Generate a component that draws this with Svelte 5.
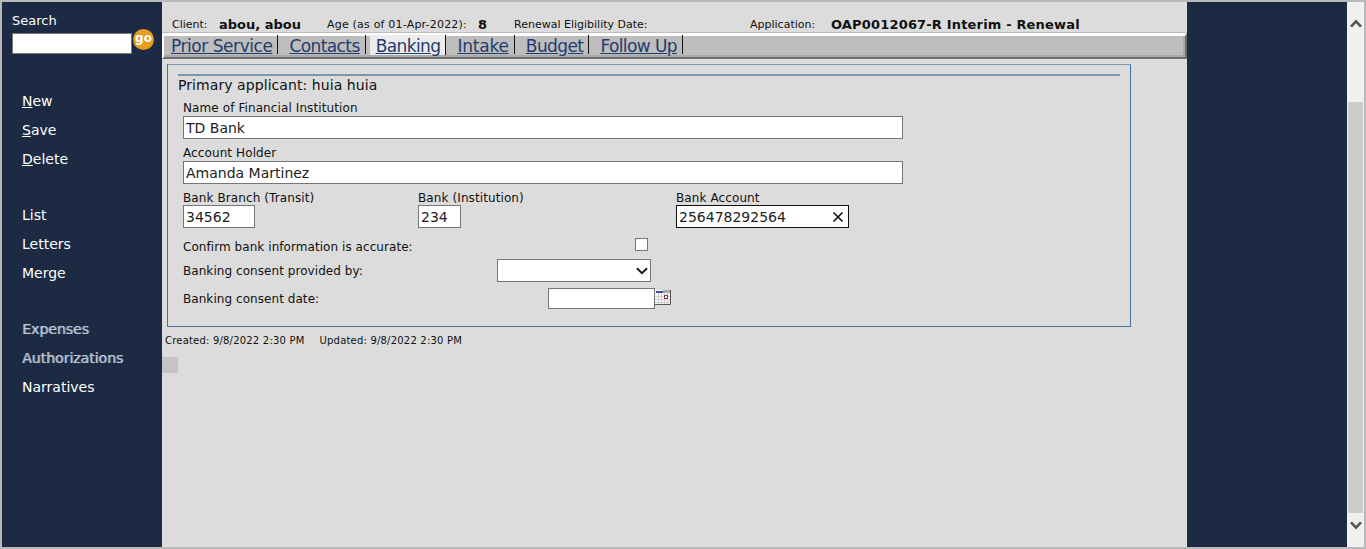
<script>
  const tabs = ['Prior Service', 'Contacts', 'Banking', 'Intake', 'Budget', 'Follow Up'];
  const groups = [
    [{ k: 'N', r: 'ew' }, { k: 'S', r: 'ave' }, { k: 'D', r: 'elete' }],
    [{ r: 'List' }, { r: 'Letters' }, { r: 'Merge' }],
    [{ r: 'Expenses', dim: true }, { r: 'Authorizations', dim: true }, { r: 'Narratives' }]
  ];
</script>

<div class="frame">
  <aside class="side">
    <div class="search">
      <label for="q">Search</label>
      <div class="searchrow">
        <input id="q" class="q" />
        <span class="go">go</span>
      </div>
    </div>
    <nav>
      {#each groups as g}
        <ul>
          {#each g as it}
            <li class:dim={it.dim}>{#if it.k}<u>{it.k}</u>{/if}{it.r}</li>
          {/each}
        </ul>
      {/each}
    </nav>
  </aside>

  <main class="main">
    <header class="head">
      <span class="h1">Client:</span><b class="h2">abou, abou</b>
      <span class="h3">Age (as of 01-Apr-2022):</span><b class="h4">8</b>
      <span class="h5">Renewal Eligibility Date:</span>
      <span class="h6">Application:</span><b class="h7">OAP0012067-R Interim - Renewal</b>
    </header>
    <div class="tabs">
      {#each tabs as t}
        <a href="#top" class="tab" class:on={t === 'Banking'}>{t}</a>
      {/each}
    </div>

    <section class="box">
      <hr />
      <div class="title">Primary applicant: huia huia</div>
      <label class="lab" for="f1">Name of Financial Institution</label>
      <input id="f1" class="inp wide" value="TD Bank" readonly />
      <label class="lab" for="f2">Account Holder</label>
      <input id="f2" class="inp wide" value="Amanda Martinez" readonly />
      <div class="bank">
        <div class="c1">
          <label class="lab" for="f3">Bank Branch (Transit)</label>
          <input id="f3" class="inp w72" value="34562" readonly />
        </div>
        <div class="c2">
          <label class="lab" for="f4">Bank (Institution)</label>
          <input id="f4" class="inp w43" value="234" readonly />
        </div>
        <div class="c3">
          <label class="lab" for="f5">Bank Account</label>
          <div class="acct">
            <input id="f5" class="inp w173" value="256478292564" readonly />
            <svg class="x" width="12" height="12" viewBox="0 0 12 12"><path d="M1.5 1.5 10.5 10.5M10.5 1.5 1.5 10.5" stroke="#111" stroke-width="1.6" fill="none"/></svg>
          </div>
        </div>
      </div>
      <div class="row r1"><span class="rl l1">Confirm bank information is accurate:</span><span class="check"></span></div>
      <div class="row r2"><span class="rl l2">Banking consent provided by:</span>
        <div class="sel"><svg width="12" height="8" viewBox="0 0 12 8"><path d="M1 1.2 6 6.2 11 1.2" stroke="#1a1a1a" stroke-width="2" fill="none"/></svg></div>
      </div>
      <div class="row r3"><span class="rl l3">Banking consent date:</span>
        <span class="date"></span>
        <svg class="cal" width="16" height="15" viewBox="0 0 16 15">
          <rect x="0" y="0" width="16" height="15" fill="#f6f6f6"/>
          <rect x="1" y="1" width="7" height="2" fill="#4a4aa8"/>
          <rect x="8" y="0" width="7" height="3" fill="#aaa"/>
          <path d="M0 6.5H15M0 9.5H15M0 12.5H15M3.5 3V15M6.5 3V15M9.5 3V15M12.5 3V15" stroke="#cfcfcf" stroke-width="1"/>
          <rect x="9.5" y="5.5" width="3" height="3" fill="#fff" stroke="#a03030"/>
          <path d="M15.5 0V14.5H0" stroke="#555" fill="none"/>
        </svg>
      </div>
    </section>

    <div class="stamp"><span>Created: 9/8/2022 2:30 PM</span><span>Updated: 9/8/2022 2:30 PM</span></div>
    <div class="chip"></div>
  </main>

  <div class="right"></div>

  <div class="scroll">
    <svg class="arrow" width="12" height="9" viewBox="0 0 12 9"><path d="M1 7.6 6 2.4 11 7.6" stroke="#555" stroke-width="2.6" fill="none"/></svg>
    <div class="thumb"></div>
    <svg class="arrow" width="12" height="9" viewBox="0 0 12 9"><path d="M1 1.4 6 6.6 11 1.4" stroke="#555" stroke-width="2.6" fill="none"/></svg>
  </div>
</div>

<style>
  :global(body) { margin: 0; overflow: hidden; }
  * { box-sizing: border-box; }
  .frame {
    width: 1366px; height: 549px; display: flex;
    border: 2px solid #b9b9b9;
    font-family: "DejaVu Sans", sans-serif;
    color: #111;
    background: #dcdcdc;
  }
  .side { width: 160px; flex: none; background: #1c2a44; color: #fff; padding: 11px 0 0 10px; font-size: 13px; }
  .search label { display: block; line-height: 15px; font-size: 13px; }
  .searchrow { display: flex; align-items: flex-start; margin-top: 5px; }
  .q { width: 120px; height: 21px; border: 1px solid #777; background: #fff; padding: 0; }
  .go {
    width: 21px; height: 21px; margin: -4px 0 0 1px; border-radius: 50%;
    background: #e89c1e; color: #fff; font-weight: 700; font-size: 12px;
    display: flex; align-items: center; justify-content: center; padding-bottom: 3px;
  }
  nav { margin: 37px 0 0 10px; }
  ul { list-style: none; margin: 0 0 27px; padding: 0; }
  li { height: 29px; line-height: 20px; font-size: 14px; }
  li.dim { color: #bcc7d6; text-shadow: 1px 0 0 rgba(220, 225, 232, .55); }

  .main { width: 1025px; flex: none; background: #dcdcdc; }
  .head {
    height: 31px; border-bottom: 1px solid #bdbdbd;
    display: flex; align-items: flex-end; padding: 0 0 0 10px;
    font-size: 11px; line-height: 14px;
  }
  .head b { font-size: 13px; font-weight: 700; }
  .head span, .head b { white-space: nowrap; }
  .h1 { width: 47px; }
  .h2 { width: 108px; }
  .h3 { width: 151px; letter-spacing: .2px; }
  .h4 { width: 36px; }
  .h5 { width: 236px; }
  .h6 { width: 81px; }
  .head .h7 { letter-spacing: .17px; }

  .tabs {
    width: 1025px; height: 26px; display: flex; align-items: flex-start;
    background: #bdbdbd;
    border-top: 3px solid #fff; border-left: 2px solid #fff;
    border-right: 2px solid #6f6f6f; border-bottom: 2px solid #6f6f6f;
    box-shadow: inset 0 -2px 0 #a8a8a8, inset -2px 0 0 #a8a8a8;
    padding-left: 5px;
  }
  .tab {
    height: 19px; margin-top: -1px; line-height: 23px; font-size: 17px; letter-spacing: -.6px;
    color: #1f3c6e; padding: 0 5px 0 2px;
    border-right: 1px solid #111; margin-right: 9px; white-space: nowrap;
  }
  .tab:nth-child(1) { letter-spacing: -.45px; }
  .tab:nth-child(4) { letter-spacing: -.2px; }
  .tab.on { background: #ececec; height: 20px; margin-left: -5px; padding-left: 6px; }

  .box {
    width: 964px; height: 263px; margin: 5px 0 0 5px;
    border: 1px solid #4a7196; border-top-color: #7d98ae;
    padding: 9px 10px 0 10px;
  }
  hr { margin: 0; border: 0; height: 2px; background: #7d98ae; }
  .title { font-size: 14px; line-height: 18px; letter-spacing: .07px; }
  .lab { display: block; font-size: 12px; line-height: 15px; letter-spacing: .1px; }
  .box > .lab { margin: 7px 0 0 5px; }
  .box > .lab + .inp { margin-left: 5px; }
  .inp {
    display: block; height: 23px; border: 1px solid #767676; background: #fff;
    font: 14px "DejaVu Sans", sans-serif; color: #222; padding: 0 2px; border-radius: 0; outline: 0;
  }
  .wide { width: 720px; }
  .w72 { width: 72px; }
  .w43 { width: 43px; }
  .w173 { width: 173px; border-color: #111; }
  .box > .inp + .lab { margin-top: 7px; }
  .bank { display: flex; margin: 7px 0 0 5px; }
  .bank .lab { line-height: 14px; }
  .c1 { width: 235px; }
  .c2 { width: 258px; }
  .acct { position: relative; }
  .x { position: absolute; right: 5px; top: 6px; }
  .row { display: flex; align-items: center; margin-left: 5px; font-size: 12px; letter-spacing: .06px; }
  .r1 { margin-top: 10px; height: 13px; }
  .r2 { margin-top: 8px; height: 23px; }
  .r3 { margin-top: 6px; height: 21px; }
  .l1 { width: 452px; margin-top: 4px; }
  .l2 { width: 314px; }
  .l3 { width: 365px; }
  .check { width: 13px; height: 13px; background: #fff; border: 1px solid #767676; }
  .sel { width: 154px; height: 23px; background: #fff; border: 1px solid #767676; display: flex; align-items: center; justify-content: flex-end; padding-right: 2px; }
  .date { width: 107px; height: 21px; background: #fff; border: 1px solid #767676; }
  .cal { margin: -3px 0 0 0; }

  .stamp { margin: 7px 0 0 3px; font-size: 10px; line-height: 13px; display: flex; gap: 15px; letter-spacing: .2px; }
  .chip { width: 16px; height: 16px; background: #c4c4c4; margin-top: 10px; }

  .right { width: 160px; flex: none; background: #1c2a44; }
  .scroll { width: 17px; flex: none; background: #f0f0f0; display: flex; flex-direction: column; align-items: center; }
  .arrow { flex: none; margin: 17px 0 0; }
  .thumb { width: 15px; flex: 1; background: #cdcdcd; margin-top: 74px; margin-bottom: 8px; }
  .thumb + .arrow { margin: 0 0 17px; }
</style>
